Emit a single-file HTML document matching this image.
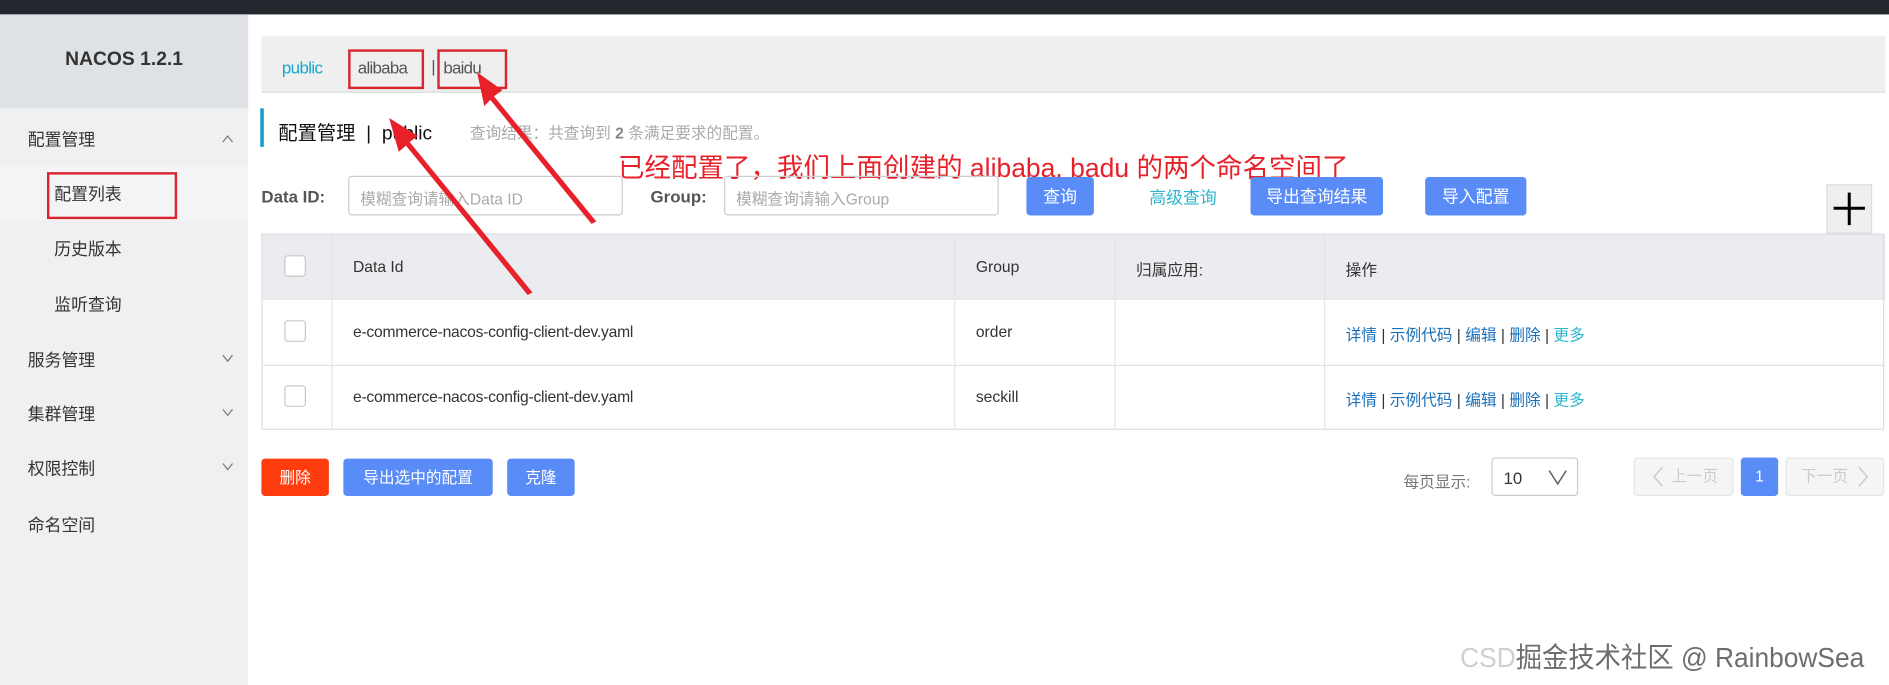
<!DOCTYPE html>
<html><head><meta charset="utf-8"><style>
html,body{margin:0;padding:0;width:1889px;height:685px;overflow:hidden;background:#fff}
#w{position:absolute;left:0;top:0;width:1568px;height:569px;transform:scale(1.20472,1.20387);transform-origin:0 0;font-family:"Liberation Sans","Noto Sans CJK SC",sans-serif;color:#333;font-size:13px}
.a{position:absolute;white-space:nowrap}
.btn{position:absolute;background:#5a8cf8;color:#fff;border-radius:3px;text-align:center;font-size:14px}
.menu{position:absolute;left:23px;font-size:14px;color:#333}
.vl{position:absolute;width:1px;background:#e3e4e6}
.hl{position:absolute;height:1px;background:#e3e4e6;left:217px;width:1348px}
.cb{position:absolute;left:236px;width:16px;height:16px;border:1px solid #c8c8c8;border-radius:3px;background:#fff}
.op{color:#1a6fb8}.op b{font-weight:normal;color:#333}
</style></head><body><div id="w">
<div class="a" style="left:0;top:0;width:1568px;height:12px;background:#23272e"></div>
<div class="a" style="left:0;top:12px;width:206px;height:557px;background:#eef0f2"></div>
<div class="a" style="left:0;top:12px;width:206px;height:78px;background:#dfe2e5"></div>
<div class="a" style="left:0;top:50px;width:206px;text-align:center;font-weight:bold;font-size:16px;color:#333;line-height:0">NACOS 1.2.1</div>
<div class="a" style="left:0;top:137px;width:206px;height:46px;background:#f3f4f6"></div>
<div class="menu" style="top:106px">配置管理</div>
<div class="menu" style="left:45px;top:151px">配置列表</div>
<div class="a" style="left:39px;top:143px;width:108px;height:39px;border:2px solid #d9262e;box-sizing:border-box"></div>
<div class="menu" style="left:45px;top:197px">历史版本</div>
<div class="menu" style="left:45px;top:243px">监听查询</div>
<div class="menu" style="top:289px">服务管理</div>
<div class="menu" style="top:334px">集群管理</div>
<div class="menu" style="top:379px">权限控制</div>
<div class="menu" style="top:426px">命名空间</div>

<div class="a" style="left:217px;top:30px;width:1348px;height:46px;background:#efefef;border-bottom:1px solid #d8d8d8"></div>
<div class="a" style="left:234px;top:48px;font-size:14px;color:#14a8cc;letter-spacing:-0.5px">public</div>
<div class="a" style="left:297px;top:48px;font-size:14px;color:#555;letter-spacing:-0.6px">alibaba</div>
<div class="a" style="left:358px;top:47px;font-size:14px;color:#555">|</div>
<div class="a" style="left:368px;top:48px;font-size:14px;color:#555;letter-spacing:-0.6px">baidu</div>
<div class="a" style="left:289px;top:41px;width:63px;height:33px;border:2px solid #d9262e;box-sizing:border-box"></div>
<div class="a" style="left:363px;top:41px;width:58px;height:33px;border:2px solid #d9262e;box-sizing:border-box"></div>

<div class="a" style="left:216px;top:90px;width:3px;height:32px;background:#16a0c8"></div>
<div class="a" style="left:231px;top:97px;font-size:16px;color:#111">配置管理 &nbsp;| &nbsp;public</div>
<div class="a" style="left:390px;top:100px;font-size:13px;color:#aaa">查询结果：共查询到 <b style="color:#888">2</b> 条满足要求的配置。</div>
<div class="a" style="left:513px;top:122px;font-size:22px;color:#e8202a">已经配置了，我们上面创建的 alibaba, badu 的两个命名空间了</div>

<div class="a" style="left:217px;top:155px;font-weight:bold;color:#555;font-size:14px">Data ID:</div>
<div class="a" style="left:289px;top:146px;width:228px;height:33px;border:1px solid #ccc;border-radius:3px;box-sizing:border-box"></div>
<div class="a" style="left:299px;top:155px;color:#aaa">模糊查询请输入Data ID</div>
<div class="a" style="left:540px;top:155px;font-weight:bold;color:#555;font-size:14px">Group:</div>
<div class="a" style="left:601px;top:146px;width:228px;height:33px;border:1px solid #ccc;border-radius:3px;box-sizing:border-box"></div>
<div class="a" style="left:611px;top:155px;color:#aaa">模糊查询请输入Group</div>
<div class="btn" style="left:852px;top:147px;width:56px;height:32px;line-height:32px">查询</div>
<div class="a" style="left:954px;top:154px;font-size:14px;color:#2ab6cc">高级查询</div>
<div class="btn" style="left:1038px;top:147px;width:110px;height:32px;line-height:32px">导出查询结果</div>
<div class="btn" style="left:1183px;top:147px;width:84px;height:32px;line-height:32px">导入配置</div>
<div class="a" style="left:1516px;top:153px;width:38px;height:41px;background:#efefef;border:1px solid #ddd;box-sizing:border-box"></div>

<div class="a" style="left:217px;top:194px;width:1348px;height:54px;background:#ebecef"></div>
<div class="a" style="left:217px;top:194px;width:1347px;height:163px;border:1px solid #dcdde0;box-sizing:border-box"></div>
<div class="hl" style="top:248px"></div><div class="hl" style="top:303px"></div>
<div class="vl" style="left:275px;top:194px;height:163px"></div>
<div class="vl" style="left:792px;top:194px;height:163px"></div>
<div class="vl" style="left:925px;top:194px;height:163px"></div>
<div class="vl" style="left:1099px;top:194px;height:163px"></div>
<div class="cb" style="top:212px"></div><div class="cb" style="top:266px"></div><div class="cb" style="top:320px"></div>
<div class="a" style="left:293px;top:214px">Data Id</div>
<div class="a" style="left:810px;top:214px">Group</div>
<div class="a" style="left:943px;top:214px">归属应用:</div>
<div class="a" style="left:1117px;top:214px">操作</div>
<div class="a" style="left:293px;top:268px;letter-spacing:-0.2px">e-commerce-nacos-config-client-dev.yaml</div>
<div class="a" style="left:810px;top:268px">order</div>
<div class="a op" style="left:1117px;top:268px">详情 <b>|</b> 示例代码 <b>|</b> 编辑 <b>|</b> 删除 <b>|</b> <span style="color:#2ab6cc">更多</span></div>
<div class="a" style="left:293px;top:322px;letter-spacing:-0.2px">e-commerce-nacos-config-client-dev.yaml</div>
<div class="a" style="left:810px;top:322px">seckill</div>
<div class="a op" style="left:1117px;top:322px">详情 <b>|</b> 示例代码 <b>|</b> 编辑 <b>|</b> 删除 <b>|</b> <span style="color:#2ab6cc">更多</span></div>

<div class="btn" style="left:217px;top:381px;width:56px;height:31px;line-height:31px;background:#fe3c0e;font-size:13px">删除</div>
<div class="btn" style="left:285px;top:381px;width:124px;height:31px;line-height:31px;font-size:13px">导出选中的配置</div>
<div class="btn" style="left:421px;top:381px;width:56px;height:31px;line-height:31px;font-size:13px">克隆</div>
<div class="a" style="left:1165px;top:390px;color:#777">每页显示:</div>
<div class="a" style="left:1238px;top:380px;width:72px;height:32px;border:1px solid #ccc;border-radius:3px;box-sizing:border-box"></div>
<div class="a" style="left:1248px;top:389px;font-size:14px">10</div>
<div class="a" style="left:1356px;top:380px;width:83px;height:32px;background:#f5f5f5;border:1px solid #e5e5e5;border-radius:3px;box-sizing:border-box;color:#ccc;line-height:30px;padding-left:30px">上一页</div>
<div class="a" style="left:1445px;top:380px;width:31px;height:32px;background:#5a8cf8;border-radius:3px;color:#fff;text-align:center;line-height:32px">1</div>
<div class="a" style="left:1482px;top:380px;width:82px;height:32px;background:#f5f5f5;border:1px solid #e5e5e5;border-radius:3px;box-sizing:border-box;color:#ccc;line-height:30px;padding-left:12px">下一页</div>

<div class="a" style="left:1212px;top:527px;font-size:23px;color:rgba(150,150,150,.45);transform:scaleX(0.95);transform-origin:0 0">CSD<span style="color:rgba(60,60,60,.75)">掘金技术社区 @ RainbowSea</span></div>

<svg class="a" style="left:0;top:0" width="1568" height="569" fill="none">
<g stroke="#777" stroke-width="1">
<polyline points="185,118 189,113 193,118"/>
<polyline points="185,295 189,300 193,295"/>
<polyline points="185,340 189,345 193,340"/>
<polyline points="185,385 189,390 193,385"/>
</g>
<g stroke="#666" stroke-width="1.3">
<polyline points="1286,391 1293,402 1300,391"/>
</g>
<g stroke="#ccc" stroke-width="1.3">
<polyline points="1380,388 1373,396 1380,404"/>
<polyline points="1543,388 1550,396 1543,404"/>
</g>
<g stroke="#000" stroke-width="2.5">
<line x1="1535" y1="160" x2="1535" y2="187"/><line x1="1522" y1="173" x2="1548" y2="173"/>
</g>
<polygon points="438,245 442,243 340,118 347,113 323,98 331,126 337,121" fill="#e8202a"/>
<polygon points="491,186 495,184 410,80 417,75 396,60 402,88 407,83" fill="#e8202a"/>
</svg>
</div></body></html>
